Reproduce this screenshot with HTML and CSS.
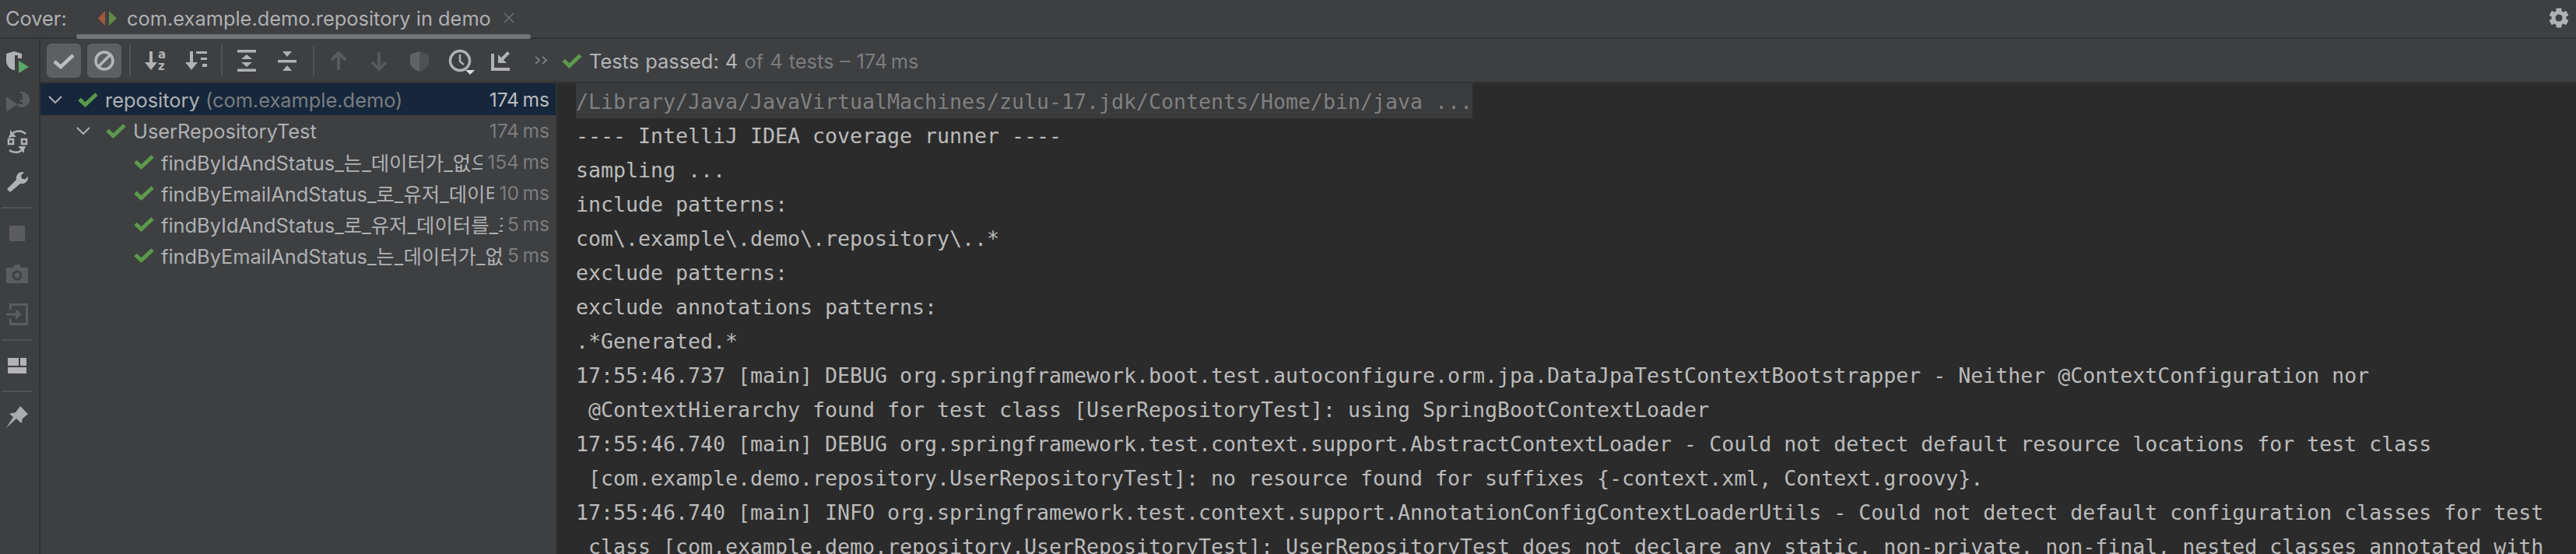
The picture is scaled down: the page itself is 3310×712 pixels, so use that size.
FILE: index.html
```html
<!DOCTYPE html>
<html lang="en">
<head>
<meta charset="utf-8">
<title>Cover</title>
<link rel="stylesheet" href="styles.css">
</head>
<body>
<svg class="sprite" aria-hidden="true"><defs>
  <symbol id="check" viewBox="0 0 26 20"><path d="M2 9.5l7.5 7L24 3" fill="none" stroke="#5b9a4b" stroke-width="5"/></symbol>
  <symbol id="chev" viewBox="0 0 18 10"><path d="M1 1l8 8 8-8" fill="none" stroke="#afb1b3" stroke-width="2"/></symbol>
</defs></svg>
<div class="app">
  <header class="header">
    <span class="cover-label">Cover:</span>
    <div class="tab">
      <svg class="tab-icon" viewBox="0 0 24 19"><path d="M9 0L0 9.5 9 19z" fill="#a0593a"/><path d="M14 0l10 9.5L14 19z" fill="#5f8a4a"/></svg>
      <span class="tab-title">com.example.demo.repository in demo</span>
      <svg class="tab-close" viewBox="0 0 14 14"><path d="M1 1l12 12M13 1L1 13" stroke="#6e7072" stroke-width="1.6" fill="none"/></svg>
    </div>
    <svg class="gear" viewBox="0 0 26 26"><g fill="#afb1b3"><rect x="9.500" y="0.500" width="7" height="25" rx="1"/><rect x="9.500" y="0.500" width="7" height="25" rx="1" transform="rotate(60 13 13)"/><rect x="9.500" y="0.500" width="7" height="25" rx="1" transform="rotate(120 13 13)"/><circle cx="13" cy="13" r="9.500"/></g><circle cx="13" cy="13" r="4.500" fill="#3e3f41"/></svg>
  </header>
  <div class="body">
    <aside class="side">
      <svg class="side-icon" viewBox="0 0 50 52"><path fill="#afb1b3" d="M8 16l10-3 10 3v6h-5v-4h-4v19h-2c-5-2-9-6-9-12z"/><path fill="#59a869" d="M24 25v16l13-8z"/></svg>
      <svg class="side-icon" viewBox="0 0 50 52"><path fill="#5a5c5e" d="M8 19l14 10-14 10zM28 13a10 10 0 1 1-7 17l5-3v-14z"/><path fill="#3e3f41" d="M25 15h4v8h-4zM25 26h4v3h-4z"/></svg>
      <svg class="side-icon" viewBox="0 0 50 52"><g fill="none" stroke="#afb1b3" stroke-width="2.500"><path d="M12 20a13 13 0 0 1 21-5M32 31a13 13 0 0 1-20 5"/><rect x="11" y="22" width="6" height="6"/><rect x="28" y="22" width="6" height="6"/></g><path fill="#afb1b3" d="M13 10v9h8zM31 40v-9h-8z"/></svg>
      <svg class="side-icon" viewBox="0 0 50 52"><path fill="#afb1b3" d="M9 34l12-12c-1-5 2-10 8-10l2 .5-4 4 1 4 4 1 4-3.500c.5 6-4 10-10 9L13 38z"/></svg>
      <div class="side-sep first"></div>
      <svg class="side-icon" viewBox="0 0 50 52"><rect x="12" y="16" width="20" height="20" fill="#5a5c5e"/></svg>
      <svg class="side-icon" viewBox="0 0 50 52"><path fill="#5a5c5e" d="M8 18h9l2-4h6l2 4h9v20H8z"/><circle cx="22" cy="28" r="5" fill="none" stroke="#3e3f41" stroke-width="3"/></svg>
      <svg class="side-icon" viewBox="0 0 50 52"><path fill="none" stroke="#5a5c5e" stroke-width="3" d="M13.500 20v-6.500h21v25h-21V32"/><path fill="#5a5c5e" d="M8 24.500h12V19l8 7-8 7v-5.500H8z"/></svg>
      <div class="side-sep"></div>
      <svg class="side-icon" viewBox="0 0 50 52"><path fill="#b1b3b6" d="M10 16h14v10H10zM26 16h8v10h-8zM10 28h24v8H10z"/></svg>
      <div class="side-sep"></div>
      <svg class="side-icon" viewBox="0 0 50 52"><path fill="#a9abad" d="M26 12l10 10-7 6-1.500 6-6.500-6L8 40l9-14-5-4.500 8-1.500z"/></svg>
    </aside>
    <div class="content">
      <div class="toolbar">
        <button class="toggle"><svg viewBox="0 0 44 44"><path d="M10 23l8 7 16-15" fill="none" stroke="#bbbdbf" stroke-width="4.500"/></svg></button>
        <button class="toggle"><svg viewBox="0 0 44 44"><circle cx="22" cy="22" r="11" fill="none" stroke="#b4b6b8" stroke-width="3.500"/><path d="M15 29L29 15" stroke="#b4b6b8" stroke-width="3.500"/></svg></button>
        <div class="tool-sep first"></div>
        <svg class="tool" viewBox="0 0 52 56"><path fill="#afb1b3" d="M19 16h4v14h6l-8 10-8-10h6z"/><text class="az" x="30" y="25">a</text><text class="az" x="30" y="40">z</text></svg>
        <svg class="tool" viewBox="0 0 52 56"><path fill="#afb1b3" d="M19 16h4v14h6l-8 10-8-10h6zM27 16h14v3H27zM33 24h8v3h-8zM35 32h6v4h-6z"/></svg>
        <div class="tool-sep"></div>
        <svg class="tool" viewBox="0 0 52 56"><path fill="#afb1b3" d="M14 14h24v3.500H14zM14 38.500h24V42H14zM26 20l7 6H19zM19 30h14l-7 6z"/></svg>
        <svg class="tool" viewBox="0 0 52 56"><path fill="#afb1b3" d="M14 27h24v3.500H14zM20 16h12l-6 7zM26 34l6 7H20z"/></svg>
        <div class="tool-sep"></div>
        <svg class="tool" viewBox="0 0 52 56"><path fill="none" stroke="#595b5d" stroke-width="4" d="M26 40V18M17 27l9-9 9 9"/></svg>
        <svg class="tool" viewBox="0 0 52 56"><path fill="none" stroke="#595b5d" stroke-width="3.500" d="M26 17v22M17 30l9 9 9-9"/></svg>
        <svg class="tool" viewBox="0 0 52 56"><path fill="#4e5052" d="M14 20l12-4 12 4v10c0 6-6 10-12 12-6-2-12-6-12-12z"/><path fill="#606264" d="M14 20l12-4v26c-6-2-12-6-12-12z"/></svg>
        <svg class="tool" viewBox="0 0 52 56"><circle cx="26" cy="28" r="12.500" fill="none" stroke="#afb1b3" stroke-width="3.500"/><path fill="none" stroke="#afb1b3" stroke-width="2.500" d="M26 20v9l5 4"/><path fill="#d8dadc" d="M33 40h12l-6 6z"/></svg>
        <svg class="tool" viewBox="0 0 52 56"><path fill="#afb1b3" d="M14 19h4v18h20v4H14zM35 16l3 3-8 8 4 4H23V20l4 4z"/></svg>
        <svg class="tool" viewBox="0 0 52 56"><path fill="none" stroke="#8c8e90" stroke-width="1.600" d="M19 23l5 4.500-5 4.500M28 23l5 4.500-5 4.500"/></svg>
        <svg class="status-check"><use href="#check"/></svg>
        <span class="status"><b class="status-strong">Tests passed: 4</b> of 4 tests – 174&#8201;ms</span>
      </div>
      <div class="split">
        <section class="tree">
          <div class="row selected lvl0"><svg class="chev"><use href="#chev"/></svg><svg class="ok"><use href="#check"/></svg><span class="name">repository <i class="muted">(com.example.demo)</i></span><span class="time">174&#8201;ms</span></div>
          <div class="row lvl1"><svg class="chev"><use href="#chev"/></svg><svg class="ok"><use href="#check"/></svg><span class="name">UserRepositoryTest</span><span class="time">174&#8201;ms</span></div>
          <div class="row lvl2"><svg class="ok"><use href="#check"/></svg><span class="name">findByIdAndStatus_는_데이터가_없으면_빈값을_반환한다</span><span class="time">154&#8201;ms</span></div>
          <div class="row lvl2"><svg class="ok"><use href="#check"/></svg><span class="name">findByEmailAndStatus_로_유저_데이터를_조회한다</span><span class="time">10&#8201;ms</span></div>
          <div class="row lvl2"><svg class="ok"><use href="#check"/></svg><span class="name">findByIdAndStatus_로_유저_데이터를_조회한다</span><span class="time">5&#8201;ms</span></div>
          <div class="row lvl2"><svg class="ok"><use href="#check"/></svg><span class="name">findByEmailAndStatus_는_데이터가_없으면_빈값을_반환한다</span><span class="time">5&#8201;ms</span></div>
        </section>
        <pre class="console"><span class="cmd">/Library/Java/JavaVirtualMachines/zulu-17.jdk/Contents/Home/bin/java ...</span>---- IntelliJ IDEA coverage runner ----
sampling ...
include patterns:
com\.example\.demo\.repository\..*
exclude patterns:
exclude annotations patterns:
.*Generated.*
17:55:46.737 [main] DEBUG org.springframework.boot.test.autoconfigure.orm.jpa.DataJpaTestContextBootstrapper - Neither @ContextConfiguration nor
 @ContextHierarchy found for test class [UserRepositoryTest]: using SpringBootContextLoader
17:55:46.740 [main] DEBUG org.springframework.test.context.support.AbstractContextLoader - Could not detect default resource locations for test class
 [com.example.demo.repository.UserRepositoryTest]: no resource found for suffixes {-context.xml, Context.groovy}.
17:55:46.740 [main] INFO org.springframework.test.context.support.AnnotationConfigContextLoaderUtils - Could not detect default configuration classes for test
 class [com.example.demo.repository.UserRepositoryTest]: UserRepositoryTest does not declare any static, non-private, non-final, nested classes annotated with</pre>
      </div>
    </div>
  </div>
</div>
</body>
</html>
```

FILE: styles.css
```css
* { box-sizing: border-box; }
html, body { margin: 0; padding: 0; background: #3e3f41; }
body { font-family: Inter, "Noto Sans CJK KR", sans-serif; font-size: 25.4px; color: #afb1b3; }
.sprite { display: none; }
.app { width: 3310px; height: 712px; display: flex; flex-direction: column; overflow: hidden; }

.header { height: 50px; flex: none; display: flex; align-items: center; border-bottom: 2px solid #323334; padding-bottom: 2px; }
.cover-label { width: 98px; padding-left: 7px; flex: none; }
.tab { position: relative; width: 584px; height: 48px; display: flex; align-items: center; padding-left: 28px; flex: none; }
.tab::after { content: ""; position: absolute; left: 0; right: 0; bottom: -3px; height: 6px; border-radius: 3px; background: #6f7579; }
.tab-icon { width: 24px; height: 19px; flex: none; }
.tab-title { margin-left: 13px; white-space: nowrap; }
.tab-close { width: 14px; height: 14px; margin-left: 16px; flex: none; }
.gear { width: 26px; height: 26px; margin-left: auto; margin-right: 9px; flex: none; }

.body { flex: 1; min-height: 0; display: flex; }
.side { width: 52px; flex: none; border-right: 2px solid #323334; padding-top: 3px; display: flex; flex-direction: column; }
.side-icon { width: 50px; height: 52px; flex: none; display: block; }
.side-sep { height: 2px; margin: 6px 2px; background: #505254; flex: none; width: 40px; }
.side-sep.first { margin-top: 5px; }

.content { flex: 1; min-width: 0; display: flex; flex-direction: column; }
.toolbar { height: 57px; flex: none; display: flex; align-items: center; padding: 1px 0 0 8px; border-bottom: 2px solid #323334; }
.toggle { width: 44px; height: 44px; margin: 0 8px 0 0; padding: 0; border: 0; border-radius: 6px; background: #5c6063; flex: none; }
.toggle svg { display: block; width: 44px; height: 44px; }
.tool-sep { width: 2px; height: 40px; margin: 0 5px 0 7px; background: #505254; flex: none; }
.tool-sep.first { margin: 0 5px 0 2px; }
.tool { width: 52px; height: 56px; flex: none; display: block; }
.az { font: bold 15px "DejaVu Sans", sans-serif; fill: #afb1b3; }
.status-check { width: 26px; height: 20px; margin-left: 1px; flex: none; }
.status { margin-left: 9px; color: #7b7d7f; white-space: nowrap; word-spacing: 1px; }
.status-strong { font-weight: 400; color: #b4b6b8; }

.split { flex: 1; min-height: 0; display: flex; }
.tree { width: 664px; flex: none; border-right: 2px solid #323334; }
.row { height: 40px; display: flex; align-items: center; padding-right: 8px; }
.row.selected { height: 41px; padding-top: 1px; background: #16273c; }
.lvl0 { padding-left: 10px; }
.lvl1 { padding-left: 46px; }
.lvl2 { padding-left: 120px; }
.chev { width: 18px; height: 10px; margin-right: 20px; flex: none; }
.ok { width: 26px; height: 20px; margin-right: 9px; flex: none; }
.name { flex: 1; min-width: 0; overflow: hidden; white-space: nowrap; }
.muted { font-style: normal; color: #7b7d7f; }
.time { flex: none; margin-left: 6px; font-size: 24.6px; color: #7b7d7f; white-space: nowrap; }
.selected .time { color: #bbbdbf; }

.console { flex: 1; min-width: 0; margin: 0; padding-left: 24px; background: #2b2b2b; color: #bbbbbb; font: 26.58px/44px "DejaVu Sans Mono", monospace; overflow: hidden; white-space: pre; }
.cmd { display: block; width: 1152px; height: 45px; margin-bottom: 1px; padding-top: 2px; background: #3a3b3c; color: #808080; }
```
